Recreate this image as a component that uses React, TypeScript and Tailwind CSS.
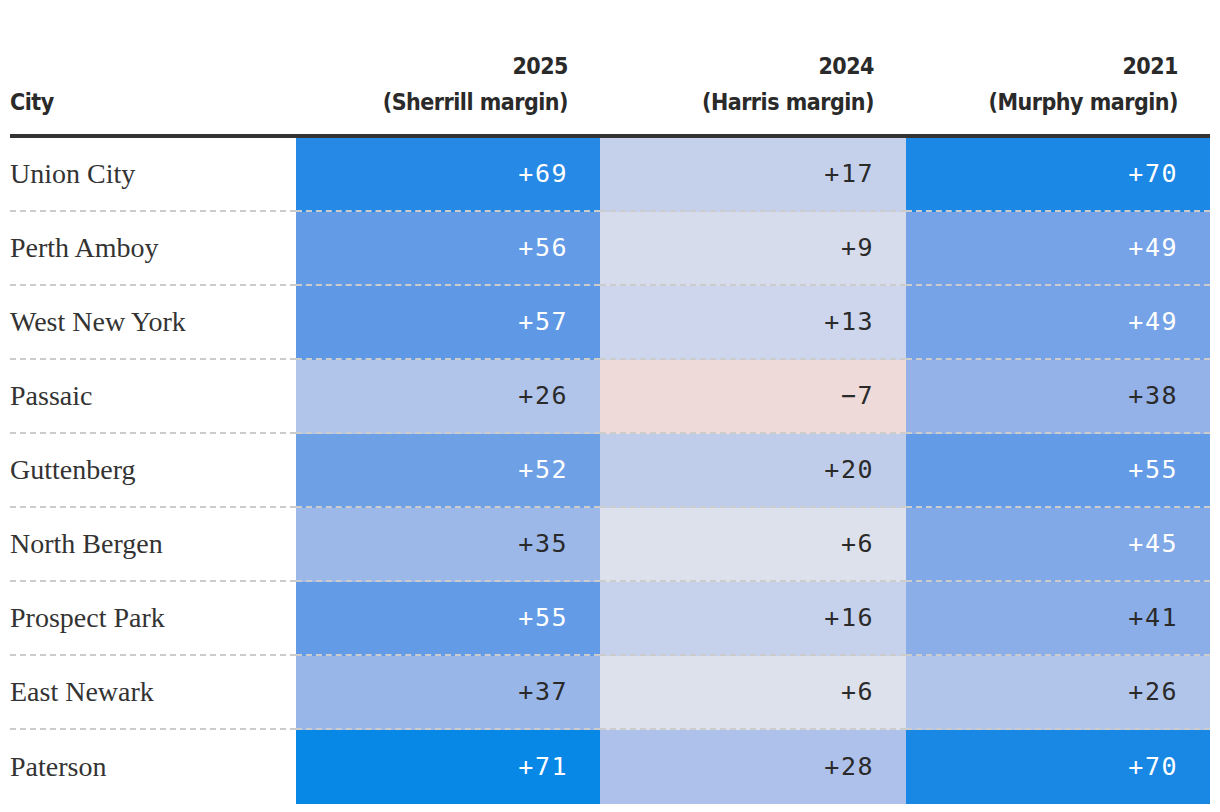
import React from 'react';

interface Row {
    city: string;
    values: { v: string; bg: string; light: boolean }[];
}

const rows: Row[] = [
    { city: 'Union City', values: [
        { v: '+69', bg: 'bg-[#2589e5]', light: true },
        { v: '+17', bg: 'bg-[#c5d1eb]', light: false },
        { v: '+70', bg: 'bg-[#1a88e4]', light: true },
    ] },
    { city: 'Perth Amboy', values: [
        { v: '+56', bg: 'bg-[#649be6]', light: true },
        { v: '+9', bg: 'bg-[#d6dcec]', light: false },
        { v: '+49', bg: 'bg-[#76a3e7]', light: true },
    ] },
    { city: 'West New York', values: [
        { v: '+57', bg: 'bg-[#5f99e6]', light: true },
        { v: '+13', bg: 'bg-[#cdd6ec]', light: false },
        { v: '+49', bg: 'bg-[#76a3e7]', light: true },
    ] },
    { city: 'Passaic', values: [
        { v: '+26', bg: 'bg-[#b1c5eb]', light: false },
        { v: '\u22127', bg: 'bg-[#eedbd9]', light: false },
        { v: '+38', bg: 'bg-[#95b2e8]', light: false },
    ] },
    { city: 'Guttenberg', values: [
        { v: '+52', bg: 'bg-[#6ea0e6]', light: true },
        { v: '+20', bg: 'bg-[#bfcdeb]', light: false },
        { v: '+55', bg: 'bg-[#649be6]', light: true },
    ] },
    { city: 'North Bergen', values: [
        { v: '+35', bg: 'bg-[#9cb8e9]', light: false },
        { v: '+6', bg: 'bg-[#dde1ec]', light: false },
        { v: '+45', bg: 'bg-[#81a9e7]', light: true },
    ] },
    { city: 'Prospect Park', values: [
        { v: '+55', bg: 'bg-[#649be6]', light: true },
        { v: '+16', bg: 'bg-[#c6d1eb]', light: false },
        { v: '+41', bg: 'bg-[#8badE8]', light: false },
    ] },
    { city: 'East Newark', values: [
        { v: '+37', bg: 'bg-[#99b6e9]', light: false },
        { v: '+6', bg: 'bg-[#dde1ec]', light: false },
        { v: '+26', bg: 'bg-[#b1c5eb]', light: false },
    ] },
    { city: 'Paterson', values: [
        { v: '+71', bg: 'bg-[#0787e6]', light: true },
        { v: '+28', bg: 'bg-[#aec1ea]', light: false },
        { v: '+70', bg: 'bg-[#1988e4]', light: true },
    ] },
];

const headers = [
    ['2025', '(Sherrill margin)'],
    ['2024', '(Harris margin)'],
    ['2021', '(Murphy margin)'],
];

const headFont = "font-['DejaVu_Sans_Condensed','DejaVu_Sans',sans-serif] font-stretch-condensed";

export default function App() {
    return (
        <div className="bg-white w-[1220px] h-[812px] px-[10px] overflow-hidden">
            {/* Header */}
            <div className={`grid grid-cols-[286px_304px_306px_304px] h-[138px] border-b-4 border-[#333] text-[23px] leading-[36px] font-bold tracking-[-0.5px] text-[#2a2a2a] ${headFont}`}>
                <div className="flex items-end pb-[14px]">City</div>
                {headers.map(([year, label]) => (
                    <div key={year} className="flex flex-col items-end justify-end pb-[14px] pr-[32px]">
                        <span>{year}</span>
                        <span>{label}</span>
                    </div>
                ))}
            </div>

            {rows.map((row, i) => {
                const last = i === rows.length - 1;
                const border = last ? '' : 'border-b-2 border-dashed border-[#cccccc]';
                return (
                    <div key={row.city} className="grid grid-cols-[286px_304px_306px_304px] h-[74px]">
                        <div className={`flex items-center text-[28px] text-[#333] font-['Liberation_Serif',serif] ${border}`}>
                            {row.city}
                        </div>
                        {row.values.map((c, j) => (
                            <div
                                key={j}
                                className={`flex items-center justify-end pr-[32px] text-[25px] tracking-[1.5px] font-['DejaVu_Sans_Mono',monospace] ${c.bg} ${c.light ? 'text-white' : 'text-[#2a2a2a]'} ${border}`}
                            >
                                {c.v}
                            </div>
                        ))}
                    </div>
                );
            })}
        </div>
    );
}
